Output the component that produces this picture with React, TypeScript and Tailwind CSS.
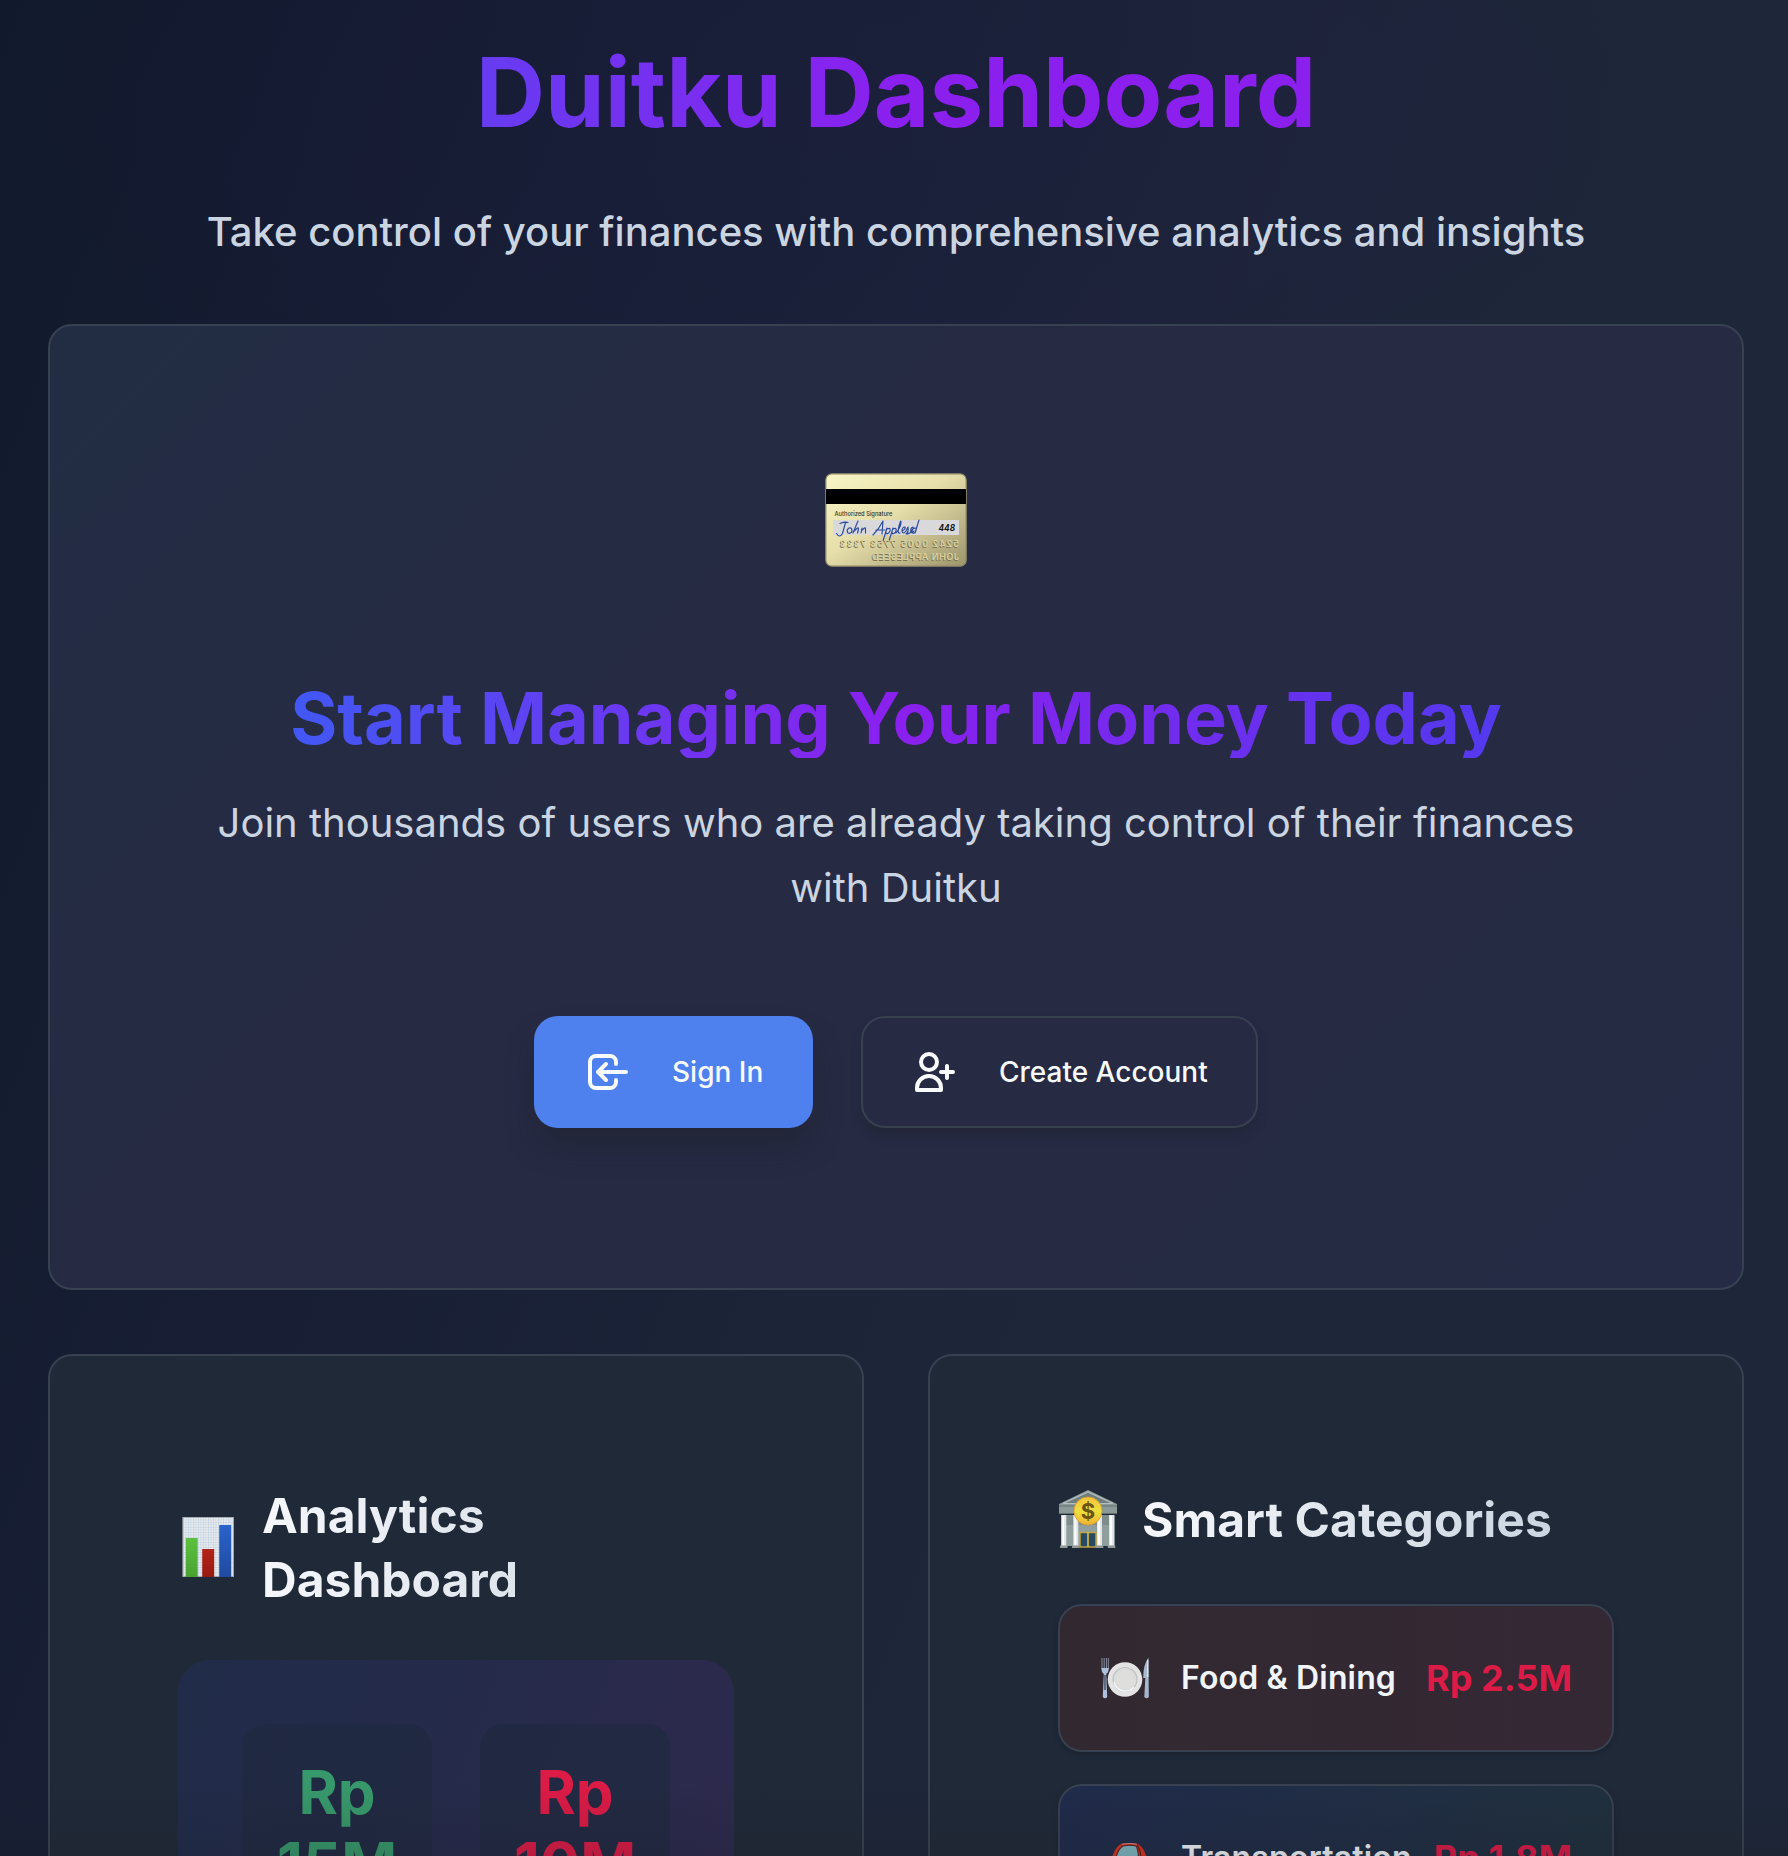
import React from 'react';

function CreditCard() {
  return (
    <svg className="block h-[94px] w-[142px]" viewBox="0 0 142 94">
      <defs>
        <linearGradient id="cardFace" x1="0" y1="0" x2="1" y2="1">
          <stop offset="0" stopColor="#f9f5c6" />
          <stop offset="0.45" stopColor="#e6dfab" />
          <stop offset="1" stopColor="#9d946b" />
        </linearGradient>
      </defs>
      <rect x="0.8" y="0.8" width="140.4" height="92.4" rx="6" fill="url(#cardFace)" stroke="#8c8666" strokeWidth="1.2" />
      <rect x="1" y="16" width="140" height="15" fill="#000" />
      <text x="9.5" y="42.5" fontSize="6" fill="#35342a" fontWeight="500" fontFamily="Inter, sans-serif" textLength="58" lengthAdjust="spacingAndGlyphs">Authorized Signature</text>
      <rect x="8" y="47" width="126" height="15" fill="#d9d9db" />
      <g fill="none" stroke="#2b4a9c" strokeWidth="1.15" strokeLinecap="round" strokeLinejoin="round">
        <path d="M15 50.500q5-2 8-1M20.500 49.500l-3 11q-3 5-6 0" />
        <path d="M24 55q-3 2-1 5 3 1 4-2 0-4-3-3M28 60l5-12M29.500 58q4-5 4-2l-1 4M36 60l1-5M36.500 58q4-5 4-2v4" />
        <path d="M48 62q6-6 10-14l-1 13M51 57h9M62 55l-4 13M62 56q4-2 3 2-2 4-4 2M68 55l-4 13M68 56q4-2 3 2-2 4-4 2M71 60q5-6 5-11 0-3-2 4-2 8 1 7M77 58q4-2 3-4-3 0-3 4 1 4 4 0l2-4q1 5-2 7 4 0 5-3 3-2 2-4-3 1-2 5 1 2 3-1M94 47l-4 13M91 55q-4 0-4 4 1 3 4-1" />
      </g>
      <text x="113.5" y="58" fontSize="8.5" fontStyle="italic" fontWeight="700" fill="#161616" fontFamily="Inter, sans-serif" textLength="16.5" lengthAdjust="spacingAndGlyphs">448</text>
      <g transform="translate(142 0) scale(-1 1)" fontFamily="Inter, sans-serif" fontSize="9" fontWeight="600">
        <g fill="#7b7452">
          <text x="8.8" y="74.6" textLength="119" lengthAdjust="spacing">5242 0005 7753 7333</text>
          <text x="8.8" y="87.6" textLength="87" lengthAdjust="spacing">JOHN APPLESEED</text>
        </g>
        <g fill="#d9d09f">
          <text x="8" y="73.8" textLength="119" lengthAdjust="spacing">5242 0005 7753 7333</text>
          <text x="8" y="86.8" textLength="87" lengthAdjust="spacing">JOHN APPLESEED</text>
        </g>
      </g>
    </svg>
  );
}

function BarChart() {
  return (
    <svg className="mb-[2px] block h-[60px] w-[60px] shrink-0" viewBox="0 0 60 60">
      <defs>
        <pattern id="chartGrid" width="2.5" height="2.5" patternUnits="userSpaceOnUse">
          <rect width="2.5" height="2.5" fill="#e9edf1" />
          <path d="M0 0H2.5M0 0V2.5" stroke="#b4c8d8" strokeWidth="0.9" />
        </pattern>
        <linearGradient id="chartGreen" x1="0" y1="0" x2="0" y2="1"><stop stopColor="#5cc240" /><stop offset="1" stopColor="#4aa132" /></linearGradient>
        <linearGradient id="chartRed" x1="0" y1="0" x2="0" y2="1"><stop stopColor="#b42419" /><stop offset="1" stopColor="#961a12" /></linearGradient>
        <linearGradient id="chartBlue" x1="0" y1="0" x2="0" y2="1"><stop stopColor="#2a63cb" /><stop offset="1" stopColor="#1f4aa0" /></linearGradient>
      </defs>
      <rect x="4.9" y="0.5" width="50.5" height="59" fill="url(#chartGrid)" stroke="#a7a9b2" />
      <rect x="7.7" y="21" width="12" height="39" fill="url(#chartGreen)" />
      <rect x="24.2" y="32" width="12" height="28" fill="url(#chartRed)" />
      <rect x="41.2" y="8" width="12" height="52" fill="url(#chartBlue)" />
    </svg>
  );
}

function Bank() {
  return (
    <svg className="mb-[2px] block h-[60px] w-[60px] shrink-0" viewBox="0 0 60 60">
      <defs>
        <linearGradient id="coin" x1="0" y1="0" x2="0" y2="1"><stop stopColor="#f7c33b" /><stop offset="0.5" stopColor="#ece03f" /><stop offset="1" stopColor="#f0b32f" /></linearGradient>
      </defs>
      <path d="M1 15L30 1l29 14v10H1z" fill="#8b9a99" />
      <path d="M5 14.5L30 3l25 11.5z" fill="#6f7e7e" stroke="#b3bfbd" strokeWidth="1.2" />
      <path d="M1 17h58M1 24.5h58" stroke="#65706f" strokeWidth="1.2" />
      <rect x="3" y="26" width="54" height="31" fill="#7d8d8c" />
      <rect x="8" y="36" width="44" height="21" fill="#8e9f9e" />
      <rect x="22" y="43.5" width="16" height="14.5" fill="#284a63" stroke="#c9a93c" strokeWidth="1.4" />
      <path d="M30 43v15" stroke="#d9bd4e" strokeWidth="1.6" />
      {[3.3, 15.3, 39, 51].map((x) => (
        <g key={x}>
          <rect x={x} y="26" width="5" height="31" fill="#e3e4e6" />
          <rect x={x + 1.2} y="27" width="1.6" height="29" fill="#fff" />
          <rect x={x - 1.3} y="56.5" width="7.6" height="2.5" fill="#8f9a99" />
        </g>
      ))}
      <circle cx="30" cy="22" r="14" fill="url(#coin)" stroke="#d89a2b" strokeWidth="0.8" />
      <text x="30" y="30" fontSize="22" fontWeight="700" textAnchor="middle" fill="#6b5511" fontFamily="Inter, sans-serif">$</text>
    </svg>
  );
}

function Plate() {
  return (
    <svg className="block h-[42px] w-[50px] shrink-0" viewBox="0 0 50 42">
      <path d="M2 1v11M4.2 1v11M6.4 1v11M8.3 1v11" stroke="#8e99a8" fill="none" strokeWidth="0.9" />
      <path d="M1.3 11h7.6q0 4-2.7 6l1 23q-2 2.500-4.400 0l1-23q-2.500-2-2.500-6z" fill="#adc0df" />
      <path d="M5 18v15" stroke="#4b566a" strokeWidth="1.6" />
      <path d="M48.5 0.5Q43 8 43.3 21h2l-1 19q2.500 2.500 4.500 0z" fill="#a7b7cc" />
      <path d="M47.7 3v17" stroke="#dfe6ee" strokeWidth="1.2" />
      <circle cx="25" cy="22.5" r="17.3" fill="#e4e4e4" />
      <circle cx="25" cy="22.5" r="12" fill="#dcdcdb" stroke="#bfc2c5" strokeWidth="1.2" />
      <path d="M14 25a11.5 11.5 0 0 0 20 5" stroke="#f4f7fb" strokeWidth="1.4" fill="none" />
      <circle cx="25" cy="22.5" r="9" fill="#dededc" />
    </svg>
  );
}

function Car() {
  return (
    <svg className="block h-[48px] w-[50px] shrink-0" viewBox="0 0 50 48">
      <path d="M12 23Q16 12 21 10q8-2 17 0 5 2 9 14v18H4V30z" fill="#d9321f" />
      <path d="M16 23q3-9 7-11 7-1.500 13 0 2 3 2.500 11z" fill="#7fb8c2" stroke="#4f2523" strokeWidth="1.1" />
      <path d="M37 10.5q3 4 4 12.500" stroke="#5b1d19" strokeWidth="1.2" fill="none" />
      <path d="M22 10.2q8-1.600 15 0" stroke="#c98a84" strokeWidth="1" fill="none" />
      <path d="M4 28h43v12H4z" fill="#b62017" />
    </svg>
  );
}

function SignInIcon() {
  return (
    <svg className="mr-10 size-12 shrink-0" viewBox="0 0 24 24" fill="none" stroke="currentColor" strokeWidth="2" strokeLinecap="round" strokeLinejoin="round">
      <path d="M11 16l-4-4m0 0l4-4m-4 4h14m-5 4v1a3 3 0 01-3 3H6a3 3 0 01-3-3V7a3 3 0 013-3h7a3 3 0 013 3v1" />
    </svg>
  );
}

function UserAddIcon() {
  return (
    <svg className="mr-10 size-12 shrink-0" viewBox="0 0 24 24" fill="none" stroke="currentColor" strokeWidth="2" strokeLinecap="round" strokeLinejoin="round">
      <path d="M18 9v3m0 0v3m0-3h3m-3 0h-3m-2-5a4 4 0 11-8 0 4 4 0 018 0zM3 20a6 6 0 0112 0v1H3v-1z" />
    </svg>
  );
}

function Stat({ value, color }: { value: string; color: string }) {
  return (
    <div className="h-[260px] flex-1 rounded-[24px] bg-[#20293f]/70 pt-8 text-center">
      <div className={'text-[60px] leading-[72px] font-bold ' + color}>
        Rp
        <br />
        {value}
      </div>
    </div>
  );
}

function Category({ icon, name, amount, tint }: { icon: React.ReactNode; name: string; amount: string; tint: string }) {
  return (
    <div className={'flex h-[148px] items-center justify-between rounded-[24px] border-2 border-[#374151] px-10 whitespace-nowrap shadow-[0_2px_6px_rgba(0,0,0,0.2)] ' + tint}>
      <div className="flex items-center gap-[31px]">
        {icon}
        <span className="text-[32px] leading-[48px] font-semibold tracking-[0.15px] text-[#f1f5f9]">{name}</span>
      </div>
      <span className="text-[36px] leading-[56px] font-bold text-[#dc1b46]">{amount}</span>
    </div>
  );
}

export default function App() {
  return (
    <div className="relative h-[1856px] w-[1789px] overflow-hidden bg-[radial-gradient(ellipse_1000px_420px_at_850px_120px,rgba(40,20,100,0.10),transparent),linear-gradient(110deg,#11192b_0%,#181f35_30%,#1e2639_62%,#1e2739_100%)] pt-[34px] pr-[45px] pl-12 font-['Inter',sans-serif]">
      <header className="text-center whitespace-nowrap">
        <h1 className="bg-[linear-gradient(90deg,#4158f4_0%,#8b20ee_50%,#8b20ee_100%)] bg-clip-text text-[96px] leading-[116px] font-bold text-transparent">Duitku Dashboard</h1>
        <p className="mt-[50px] text-[40px] leading-[64px] font-medium text-[#cbd5e1]">Take control of your finances with comprehensive analytics and insights</p>
      </header>

      <section className="mt-[60px] flex h-[966px] flex-col items-center rounded-[24px] border-2 border-[#374151] bg-[linear-gradient(135deg,#222d44_0%,#262a43_40%,#262a43_65%,#252b44_100%)] pt-[147px]">
        <CreditCard />
        <h2 className="mt-[115px] bg-[linear-gradient(90deg,#4158f4_0%,#8b20ee_50%,#533aee_100%)] bg-clip-text pb-1 text-[72px] leading-[72px] font-bold whitespace-nowrap text-transparent">Start Managing Your Money Today</h2>
        <p className="mt-8 text-center text-[40px] leading-[65px] whitespace-nowrap text-[#cbd5e1]">
          Join thousands of users who are already taking control of their finances
          <br />
          with Duitku
        </p>
        <div className="mt-24 flex gap-12 text-[28px] leading-[40px] font-medium whitespace-nowrap text-[#f8fafc]">
          <button className="flex h-28 w-[279px] items-center rounded-[24px] bg-[#4e80ee] pl-[50px] shadow-[0_20px_30px_-6px_rgba(30,32,40,0.5)]">
            <SignInIcon />
            Sign In
          </button>
          <button className="flex h-28 w-[397px] items-center rounded-[24px] border-2 border-[#374151] bg-[#262a43] pl-12 shadow-[0_8px_12px_-2px_rgba(30,32,40,0.4)]">
            <UserAddIcon />
            Create Account
          </button>
        </div>
      </section>

      <section className="mt-16 grid grid-cols-2 gap-16">
        <article className="h-[800px] rounded-[24px] border-2 border-[#374151] bg-[#202938] px-32 pt-[128px]">
          <div className="flex items-center gap-[24px]">
            <BarChart />
            <h3 className="bg-[linear-gradient(90deg,#f5f7fb,#cbd5e1)] bg-clip-text text-[48px] leading-[64px] font-bold text-transparent">Analytics Dashboard</h3>
          </div>
          <div className="mt-12 flex h-[400px] gap-12 rounded-[32px] bg-[linear-gradient(110deg,#202c49_0%,#262a4b_50%,#2f294d_100%)] px-16 pt-16">
            <Stat value="15M" color="text-[#37996b]" />
            <Stat value="10M" color="text-[#dc1b46]" />
          </div>
        </article>
        <article className="h-[800px] rounded-[24px] border-2 border-[#374151] bg-[#202938] px-32 pt-[128px]">
          <div className="flex items-center gap-[24px]">
            <Bank />
            <h3 className="bg-[linear-gradient(90deg,#f5f7fb,#cbd5e1)] bg-clip-text text-[48px] leading-[72px] font-bold whitespace-nowrap text-transparent">Smart Categories</h3>
          </div>
          <div className="mt-12 flex flex-col gap-8">
            <Category icon={<Plate />} name="Food & Dining" amount="Rp 2.5M" tint="bg-[linear-gradient(90deg,#322930,#342834)]" />
            <Category icon={<Car />} name="Transportation" amount="Rp 1.8M" tint="bg-[linear-gradient(100deg,#202b4b,#202e44_60%,#20303d)]" />
          </div>
        </article>
      </section>
      <div className="pointer-events-none absolute inset-x-0 bottom-0 h-[72px] bg-[linear-gradient(to_bottom,transparent,rgba(24,26,34,0.17))]" />
    </div>
  );
}
